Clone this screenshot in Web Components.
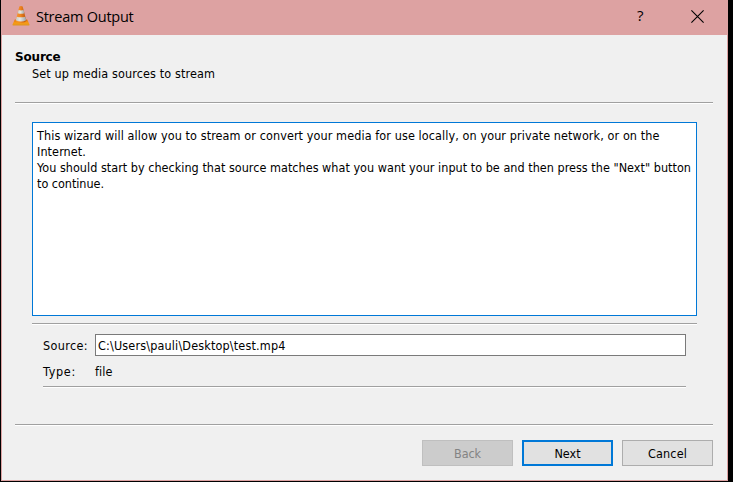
<!DOCTYPE html>
<html lang="en">
<head>
<meta charset="utf-8">
<title>Stream Output</title>
<style>
html, body { margin: 0; height: 100%; background: #000; overflow: hidden; }
body { font: 12.5px/16px "DejaVu Sans Condensed", "DejaVu Sans", sans-serif; font-stretch: condensed; color: #000; }
</style>
</head>
<body>
<wizard-window></wizard-window>
<script>
const define = (name, html, setup) => customElements.define(name, class extends HTMLElement {
  constructor() {
    super();
    this.attachShadow({ mode: 'open' }).innerHTML = html;
  }
  connectedCallback() { if (setup) setup(this); }
});

// One line of text whose tracking is adjusted to fill a given advance width.
define('fit-text', `<style>
:host { display: inline-block; white-space: pre; vertical-align: top; }
span { display: inline-block; }
</style><span></span>`, el => {
  const span = el.shadowRoot.querySelector('span');
  span.textContent = el.getAttribute('text');
  const target = parseFloat(el.getAttribute('width'));
  const natural = span.getBoundingClientRect().width;
  if (natural) span.style.letterSpacing = ((target - natural) / span.textContent.length) + 'px';
});

define('etched-line', `<style>
:host { display: block; height: 1px; background: #a0a0a0; border-bottom: 1px solid #fff; flex: none; }
</style>`);

define('traffic-cone', `<style>:host { display: block; width: 18px; height: 20px; } svg { display: block; }</style>
<svg width="18" height="20" viewBox="0 0 18 20">
<defs>
<linearGradient id="o"><stop offset="0" stop-color="#f59a35"/><stop offset=".45" stop-color="#ee8420"/><stop offset="1" stop-color="#b9540c"/></linearGradient>
<linearGradient id="w"><stop offset="0" stop-color="#c9c8c1"/><stop offset=".4" stop-color="#e6e6e2"/><stop offset="1" stop-color="#a0a3a3"/></linearGradient>
<linearGradient id="b" x2="0" y2="1"><stop offset="0" stop-color="#e0720a"/><stop offset=".55" stop-color="#f99c14"/><stop offset="1" stop-color="#dc9420"/></linearGradient>
</defs>
<path d="M2.8 13.6h12.4l2.3 5q.3 1-.7 1H1.2q-1 0-.7-1z" fill="url(#b)"/>
<path d="M7.3 .6Q9-.4 10.7.6L14.3 14.6Q13.3 16.8 9 16.8T3.7 14.6z" fill="url(#o)"/>
<path d="M6.5 4Q9 4.8 11.5 4L12.4 7.2Q9 8.2 5.6 7.2z" fill="url(#w)"/>
<path d="M4.7 10.7Q9 12 13.3 10.7L14.2 14.2Q9 16.6 3.8 14.2z" fill="url(#w)"/>
</svg>`);

define('title-bar', `<style>
:host { display: flex; height: 35px; flex: none; align-items: flex-start; background: #dda2a2; margin: 0 -1px; }
traffic-cone { margin: 6px 0 0 11px; }
.t { font: 14.5px/20px "Open Sans", "Noto Sans", sans-serif; margin: 7px 0 0 6px; flex: 1; }
.q { font: 15px/20px "Open Sans", "Noto Sans", sans-serif; margin: 5px 0 0; width: 8px; }
svg { display: block; margin: 10px 24px 0 46px; }
</style>
<traffic-cone></traffic-cone>
<div class="t"><fit-text text="Stream Output" width="97.5"></fit-text></div>
<div class="q">?</div>
<svg width="13" height="13" viewBox="0 0 13 13"><path d="M.4 .4L12.6 12.6M12.6 .4L.4 12.6" stroke="#000" stroke-width="1.1"/></svg>`);

define('push-button', `<style>
:host { display: flex; box-sizing: border-box; width: 91px; height: 26px; border: 1px solid #adadad; background: #e1e1e1; align-items: center; justify-content: center; padding-top: 1px; }
:host([default]) { border: 2px solid #0078d7; }
:host([disabled]) { background: #ccc; border-color: #bfbfbf; color: #838383; }
</style><slot></slot>`);

define('source-form', `<style>
:host { display: block; padding: 0 11px; }
.row { display: grid; grid-template-columns: 52px 1fr; align-items: center; }
.src { margin-top: 9px; }
.src > fit-text { padding-top: 2px; }
.field { box-sizing: border-box; height: 22px; border: 1px solid #7a7a7a; background: #fff; padding: 3px 2px 0; }
.type { margin: 8px 0 6px; }
</style>
<div class="row src"><fit-text text="Source:" width="45"></fit-text><div class="field"><fit-text text="C:\\Users\\pauli\\Desktop\\test.mp4" width="187.5"></fit-text></div></div>
<div class="row type"><fit-text text="Type:" width="33"></fit-text><fit-text text="file" width="17.5"></fit-text></div>
<etched-line></etched-line>`);

define('wizard-window', `<style>
:host { display: flex; flex-direction: column; box-sizing: border-box; width: 727px; height: 481px; margin-left: 1px; border: 1px solid #dda2a2; border-top: 0; background: #f0f0f0; }
main { display: flex; flex-direction: column; padding: 0 14px 0 13px; }
h1 { font: bold 12px/16px "DejaVu Sans", sans-serif; font-stretch: normal; margin: 14px 0 0; height: 17px; }
.sub { margin-left: 17px; height: 36px; }
.page { margin: 18px 16px 0 17px; }
.info { box-sizing: border-box; height: 194px; border: 1px solid #0078d7; background: #fff; padding: 5px 4px; margin-bottom: 7px; }
.info fit-text { display: block; height: 16px; }
.end { margin-top: 36px; }
footer { display: flex; justify-content: flex-end; gap: 9px; margin-top: 14px; }
</style>
<title-bar></title-bar>
<main>
<h1><fit-text text="Source" width="45.5"></fit-text></h1>
<div class="sub"><fit-text text="Set up media sources to stream" width="183"></fit-text></div>
<etched-line></etched-line>
<div class="page">
<div class="info">
<fit-text text="This wizard will allow you to stream or convert your media for use locally, on your private network, or on the" width="622.5"></fit-text>
<fit-text text="Internet." width="49"></fit-text>
<fit-text text="You should start by checking that source matches what you want your input to be and then press the &quot;Next&quot; button" width="654"></fit-text>
<fit-text text="to continue." width="67"></fit-text>
</div>
<etched-line></etched-line>
<source-form></source-form>
</div>
<etched-line class="end"></etched-line>
<footer>
<push-button disabled><fit-text text="Back" width="27"></fit-text></push-button>
<push-button default><fit-text text="Next" width="26"></fit-text></push-button>
<push-button><fit-text text="Cancel" width="39"></fit-text></push-button>
</footer>
</main>`);
</script>
</body>
</html>
